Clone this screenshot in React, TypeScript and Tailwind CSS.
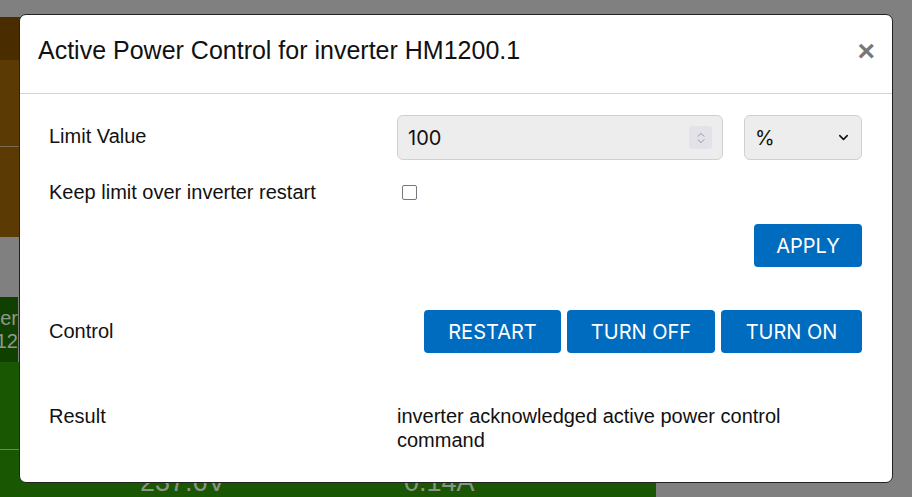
import { ChevronDown, ChevronsUpDown } from 'lucide-react';

const label = "font-['Liberation_Sans',Arial,sans-serif] text-[20px] leading-[24px] text-[#111]";
const ui = "font-['Inter','Noto_Sans',sans-serif]";
const btn = `h-[43px] rounded-[4px] bg-[#006cbf] text-white text-[20px] ${ui}`;

const Backdrop = () => (
  <div className="flex flex-col w-[656px] h-full">
    <div className="h-[17px] bg-[#808080]" />
    <div className="h-[43px] bg-[#492d00]" />
    <div className="h-[87px] bg-[#5c3a04] border-b border-[#7a6a50]" />
    <div className="h-[90px] bg-[#5c3a04]" />
    <div className="h-[60px] bg-[#808080]" />
    <div className="h-[65px] bg-[#0f4000] flex flex-col justify-center items-end w-[18px] overflow-hidden text-[#8d9a88] text-[20px] leading-[23px] font-['Liberation_Sans',Arial,sans-serif]">
      <span>er</span>
      <span>12</span>
    </div>
    <div className="h-[88px] bg-[#1a5703] border-b border-[#6b8a60]" />
    <div className="flex-1 bg-[#1a5703] flex text-[#8a9486] text-[27px] leading-[27px] font-['Liberation_Sans',Arial,sans-serif]">
      <span className="ml-[140px] mt-[19px] w-[264px]">237.6V</span>
      <span className="mt-[19px]">0.14A</span>
    </div>
  </div>
);

const PowerControlModal = () => (
  <div className="ml-[19px] mt-[14px] w-[874px] h-[469px] bg-white border border-[#222] rounded-[7px] flex flex-col">
    <div className="h-[79px] border-b border-[#d4d4d4] flex items-center justify-between pl-[18px] pr-[17px] pb-[7px]">
      <h5 className="font-['Liberation_Sans',Arial,sans-serif] text-[25px] text-[#111]">
        Active Power Control for inverter HM1200.1
      </h5>
      <span className="text-[#777] text-[30px] font-bold leading-none font-['Liberation_Sans',Arial,sans-serif]">
        ×
      </span>
    </div>

    <div className="flex flex-col pl-[29px] pr-[30px] pt-[21px]">
      <div className="flex items-center">
        <p className={`${label} w-[348px] mb-[3px]`}>Limit Value</p>
        <div className="w-[326px] h-[45px] rounded-[6px] border border-[#d0d0d0] bg-[#ededed] flex items-center justify-between pl-[10px] pr-[10px]">
          <span className={`${ui} text-[20px] text-[#111]`}>100</span>
          <span className="w-[23px] h-[23px] bg-[#e2e2e8] rounded-[3px] flex items-center justify-center">
            <ChevronsUpDown size={14} strokeWidth={1.5} color="#8a8aa0" />
          </span>
        </div>
        <div className="ml-[21px] w-[118px] h-[45px] rounded-[6px] border border-[#d0d0d0] bg-[#ededed] flex items-center justify-between pl-[10px] pr-[10px]">
          <span className={`${ui} text-[20px] text-[#111]`}>%</span>
          <ChevronDown size={15} strokeWidth={2.5} color="#111" />
        </div>
      </div>

      <div className="flex items-center mt-[20px]">
        <p className={`${label} w-[353px]`}>Keep limit over inverter restart</p>
        <span className="w-[15px] h-[15px] rounded-[2px] border-[1.5px] border-[#767684] bg-white" />
      </div>

      <div className="flex justify-end mt-[20px]">
        <button type="button" className={`${btn} w-[108px]`}>APPLY</button>
      </div>

      <div className="flex items-center justify-between mt-[43px]">
        <p className={`${label} mb-[2px]`}>Control</p>
        <div className="flex gap-[6px]">
          <button type="button" className={`${btn} w-[137px]`}>RESTART</button>
          <button type="button" className={`${btn} w-[148px]`}>TURN OFF</button>
          <button type="button" className={`${btn} w-[141px]`}>TURN ON</button>
        </div>
      </div>

      <div className="flex mt-[51px]">
        <p className={`${label} w-[348px]`}>Result</p>
        <p className={`${label} w-[440px]`}>
          inverter acknowledged active power control command
        </p>
      </div>
    </div>
  </div>
);

export default function App() {
  return (
    <div className="relative w-[912px] h-[497px] overflow-hidden bg-[#808080]">
      <Backdrop />
      <div className="absolute inset-0">
        <PowerControlModal />
      </div>
    </div>
  );
}
